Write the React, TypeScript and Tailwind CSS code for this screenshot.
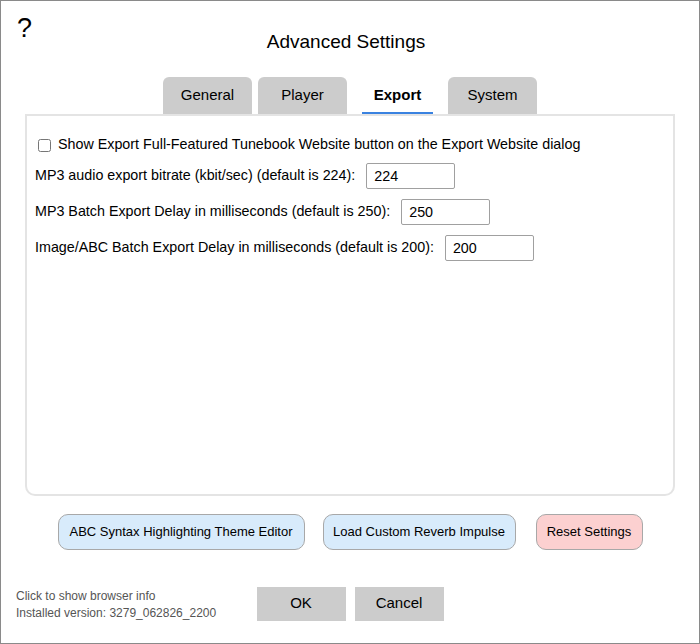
import { useState } from 'react'

const tabs = ['General', 'Player', 'Export', 'System']

interface DelayRowProps {
  label: string
  value: string
  onChange: (v: string) => void
}

function DelayRow({ label, value, onChange }: DelayRowProps) {
  return (
    <div className="flex items-center h-[26px] pl-[8px]">
      <span className="text-[14.3px] text-black">{label}</span>
      <input
        value={value}
        onChange={(e) => onChange(e.target.value)}
        className="ml-[11px] w-[89px] h-[26px] border border-[#a0a0a0] rounded-[2px] px-[7px] text-[14.3px] text-black outline-none"
      />
    </div>
  )
}

export default function App() {
  const [activeTab, setActiveTab] = useState('Export')
  const [showWebsite, setShowWebsite] = useState(false)
  const [bitrate, setBitrate] = useState('224')
  const [mp3Delay, setMp3Delay] = useState('250')
  const [imageDelay, setImageDelay] = useState('200')

  return (
    <div className="w-[700px] h-[644px] bg-white border border-[#8a8a8a] font-['Liberation_Sans',Arial,sans-serif] text-black flex flex-col">
      <div className="relative h-[76px]">
        <button className="absolute left-[16px] top-[14px] text-[27px] leading-none">?</button>
        <div className="pt-[30px] text-center text-[19px] leading-[22px] pr-[8px]">Advanced Settings</div>
      </div>

      <div className="flex justify-center gap-[6px] h-[37px]">
        {tabs.map((tab) => {
          const active = tab === activeTab
          return (
            <button
              key={tab}
              onClick={() => setActiveTab(tab)}
              className={
                active
                  ? 'relative w-[89px] h-[37px] text-[15px] font-bold rounded-t-[6px]'
                  : 'w-[89px] h-[37px] text-[15px] bg-[#cccccc] rounded-t-[6px]'
              }
            >
              {tab}
              {active && <span className="absolute left-[9px] right-[9px] bottom-0 h-[2px] bg-[#3a82e0]" />}
            </button>
          )
        })}
      </div>

      <div className="mx-[24px] h-[382px] border-2 border-[#e4e4e4] rounded-b-[10px] pt-[19px] flex flex-col gap-[10px]">
        <label className="flex items-center h-[20px] -mb-[2px] pl-[11px] gap-[7px] text-[14.3px]">
          <input
            type="checkbox"
            checked={showWebsite}
            onChange={(e) => setShowWebsite(e.target.checked)}
            className="w-[13px] h-[13px] accent-[#3a82e0]"
          />
          Show Export Full-Featured Tunebook Website button on the Export Website dialog
        </label>
        <DelayRow label="MP3 audio export bitrate (kbit/sec) (default is 224):" value={bitrate} onChange={setBitrate} />
        <DelayRow label="MP3 Batch Export Delay in milliseconds (default is 250):" value={mp3Delay} onChange={setMp3Delay} />
        <DelayRow label="Image/ABC Batch Export Delay in milliseconds (default is 200):" value={imageDelay} onChange={setImageDelay} />
      </div>

      <div className="flex justify-center mt-[18px]">
        <button className="w-[247px] h-[36px] text-[13px] bg-[#d8ebfb] border border-[#a8a8a8] rounded-[10px]">
          ABC Syntax Highlighting Theme Editor
        </button>
        <button className="ml-[18px] w-[193px] h-[36px] text-[13px] bg-[#d8ebfb] border border-[#a8a8a8] rounded-[10px]">
          Load Custom Reverb Impulse
        </button>
        <button className="ml-[20px] w-[107px] h-[36px] text-[13px] bg-[#fcd0d0] border border-[#a8a8a8] rounded-[10px]">
          Reset Settings
        </button>
      </div>

      <div className="grid grid-cols-[1fr_auto_1fr] items-center mt-[35px]">
        <div className="pl-[15px] pt-[3px] text-[12px] leading-[17px] text-[#555555]">
          <div className="cursor-pointer">Click to show browser info</div>
          <div>Installed version: 3279_062826_2200</div>
        </div>
        <div className="flex gap-[9px]">
          <button className="w-[89px] h-[34px] bg-[#cccccc] text-[15px]">OK</button>
          <button className="w-[89px] h-[34px] bg-[#cccccc] text-[15px]">Cancel</button>
        </div>
        <div />
      </div>
    </div>
  )
}
